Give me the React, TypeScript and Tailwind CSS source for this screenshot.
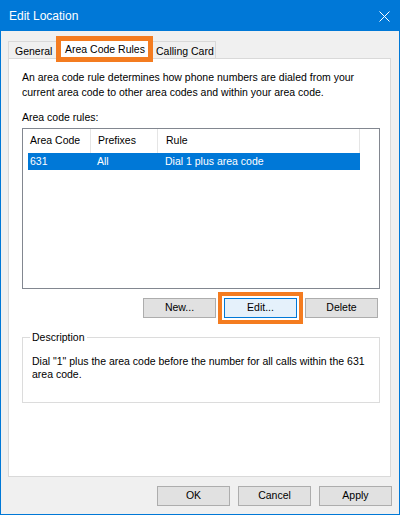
export default function App() {
  return (
    <div className="w-[400px] h-[515px] flex flex-col font-['Liberation_Sans',Arial,sans-serif] text-[10.5px] text-black whitespace-nowrap">
      <div className="h-[31px] shrink-0 bg-[#0078d7] flex items-center justify-between pl-[9px] pr-[10px] text-white text-[12px]">
        <span>Edit Location</span>
        <svg width="11" height="11" viewBox="0 0 11 11" className="mt-[1px]">
          <path d="M0.5 0.5 L10.5 10.5 M10.5 0.5 L0.5 10.5" stroke="white" strokeWidth="1" />
        </svg>
      </div>

      <div className="flex-1 bg-[#f0f0f0] border-x border-b border-[#0078d7] px-[7px] flex flex-col">
        {/* tabs */}
        <div className="h-[27px] flex items-end">
          <div className="h-[17px] w-[49px] border-t border-l border-[#d9d9d9] pl-[6px] leading-[18px]">General</div>
          <div className="relative z-10 h-[22px] w-[95px] -mb-px bg-white border-x border-t border-[#d9d9d9] pl-[7px] leading-[22px]">
            Area Code Rules
            <div className="absolute -left-[2px] -right-[2px] -top-[2px] -bottom-[3px] border-[5px] border-[#f47c20]" />
          </div>
          <div className="h-[17px] w-[64px] border-t border-r border-[#d9d9d9] pl-[4px] leading-[18px]">Calling Card</div>
        </div>

        {/* panel */}
        <div className="h-[419px] w-[383px] bg-white border border-[#d9d9d9] pt-[11px] pl-[13px] pr-[10px]">
          <p className="leading-[15px]">
            An area code rule determines how phone numbers are dialed from your
            <br />
            current area code to other area codes and within your area code.
          </p>
          <div className="mt-[10px] leading-[15px]">Area code rules:</div>

          <div className="mt-[3px] h-[161px] w-[358px] border border-[#828790] pl-[5px]">
            <div className="flex h-[24px] items-center">
              <div className="w-[62px] pl-[2px]">Area Code</div>
              <div className="w-[67px] h-full flex items-center pl-[7px] border-l border-[#e5e5e5]">Prefixes</div>
              <div className="w-[203px] h-full flex items-center pl-[8px] border-x border-[#e5e5e5]">Rule</div>
            </div>
            <div className="flex h-[17px] items-center w-[332px] bg-[#0078d7] text-white">
              <div className="w-[62px] pl-[2px]">631</div>
              <div className="w-[67px] pl-[7px]">All</div>
              <div className="w-[203px] pl-[8px]">Dial 1 plus area code</div>
            </div>
          </div>

          <div className="mt-[9px] flex justify-end gap-[8px] pr-[2px]">
            <button className="w-[73px] h-[20px] bg-[#e1e1e1] border border-[#adadad]">New...</button>
            <div className="relative">
              <button className="w-[73px] h-[20px] bg-[#e5f1fb] border border-[#0078d7]">Edit...</button>
              <div className="absolute -left-[6px] -right-[6px] -top-[6px] -bottom-[6px] border-[4px] border-[#f47c20]" />
            </div>
            <button className="w-[73px] h-[20px] bg-[#e1e1e1] border border-[#adadad]">Delete</button>
          </div>

          <div className="relative mt-[19px] h-[66px] w-[358px] border border-[#dcdcdc] pt-[17px] pl-[9px]">
            <span className="absolute left-[7px] -top-[8px] bg-white px-[2px] leading-[15px]">Description</span>
            <p className="leading-[13px]">
              Dial "1" plus the area code before the number for all calls within the 631
              <br />
              area code.
            </p>
          </div>
        </div>

        {/* dialog buttons */}
        <div className="mt-[9px] flex justify-end gap-[8px]">
          <button className="w-[73px] h-[20px] bg-[#e1e1e1] border border-[#adadad]">OK</button>
          <button className="w-[73px] h-[20px] bg-[#e1e1e1] border border-[#adadad]">Cancel</button>
          <button className="w-[73px] h-[20px] bg-[#e1e1e1] border border-[#adadad]">Apply</button>
        </div>
      </div>
    </div>
  );
}
